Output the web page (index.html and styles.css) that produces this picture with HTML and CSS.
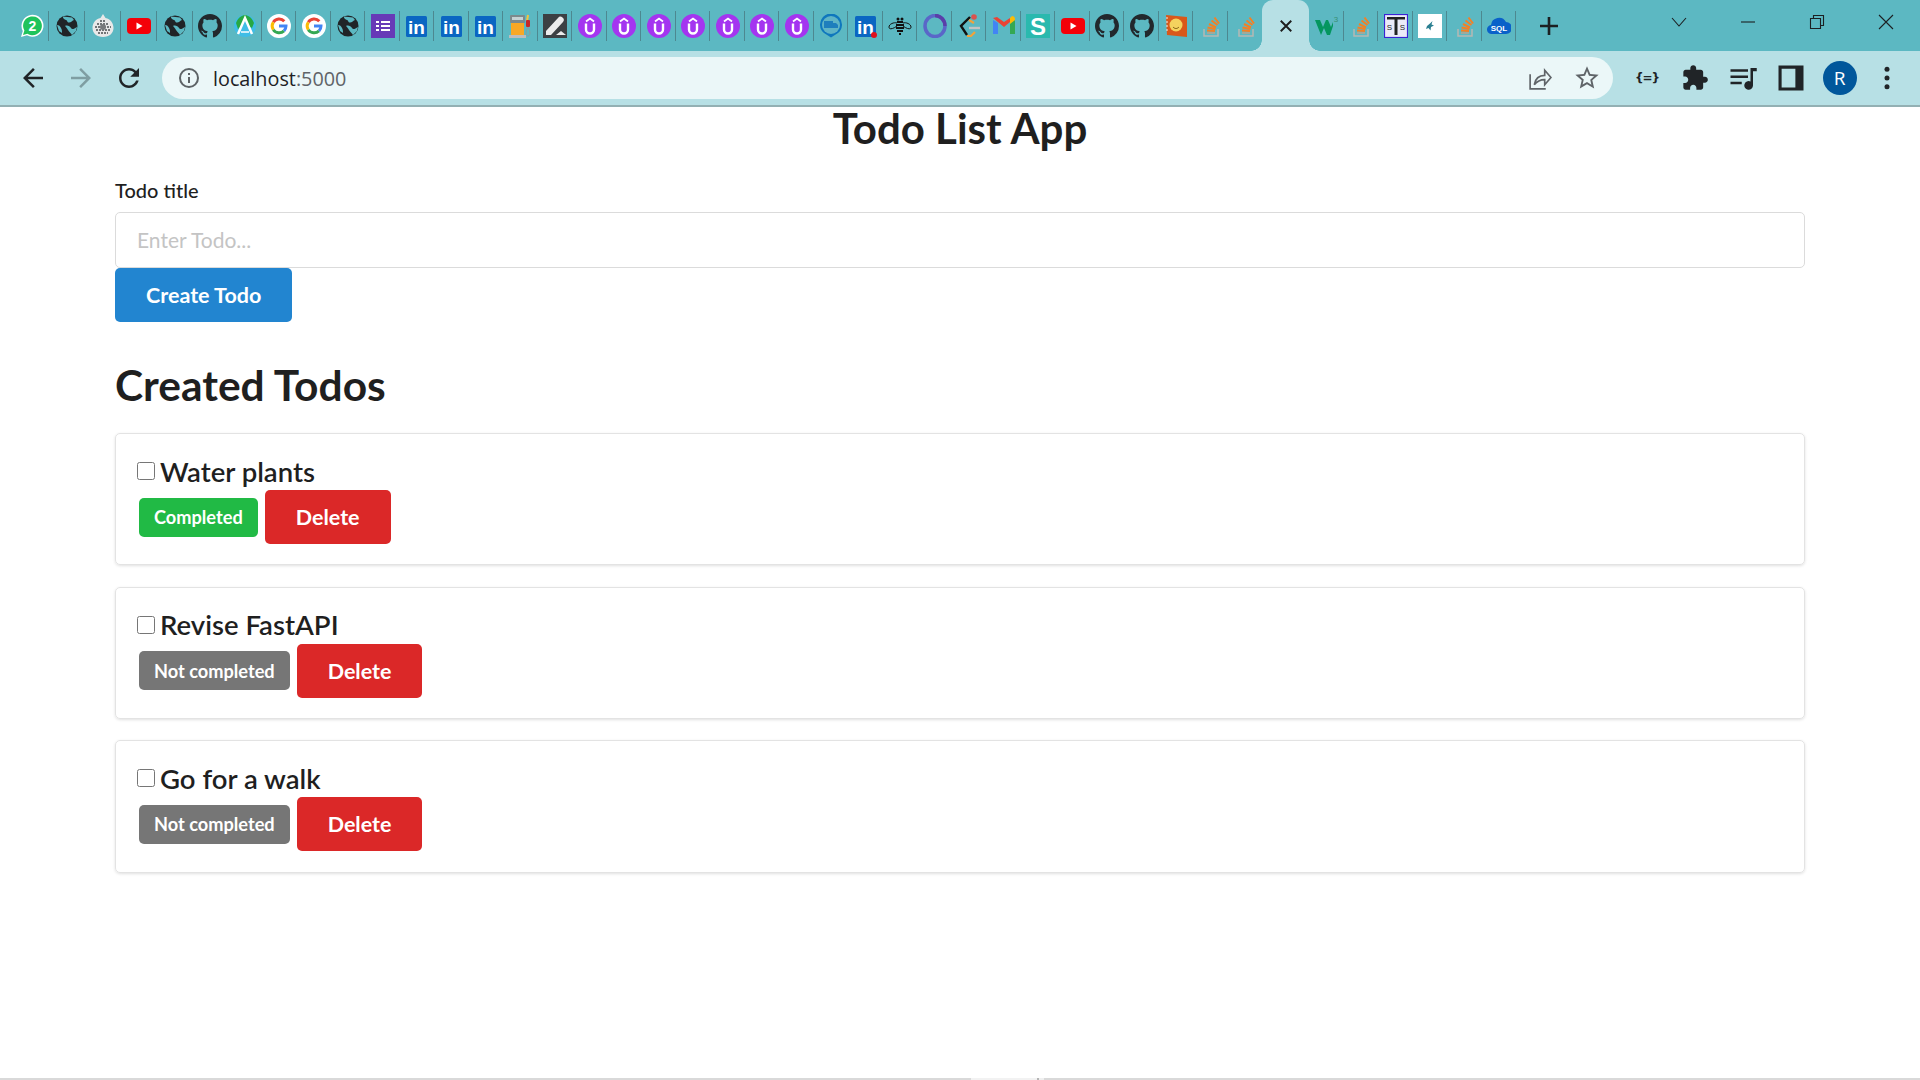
FILE: index.html
```html
<!DOCTYPE html>
<html lang="en">
<head>
    <meta charset="UTF-8">
    <meta name="viewport" content="width=device-width, initial-scale=1.0">
    <title>Todo List App</title>
    <link rel="stylesheet" href="styles.css">
</head>
<body>
    <svg class="sprites" xmlns="http://www.w3.org/2000/svg">
        <symbol id="whatsapp" viewBox="0 0 24 24">
            <path d="M1 23l1.800-6A11 11 0 1 1 7 21.300z" fill="#fff"/>
            <path d="M3 21l1.400-4.400A9.400 9.400 0 1 1 7.400 19.700z" fill="#1fc35c"/>
            <text x="12.400" y="17" text-anchor="middle" font-family="Liberation Sans" font-weight="700" font-size="14" fill="#fff">2</text>
        </symbol>
        <symbol id="globe" viewBox="0 0 24 24">
            <circle cx="12" cy="12" r="10.500" fill="#202427"/>
            <path d="M8 2.500c-.5 2 1.500 3 3 3.500s1 2.500 3 2.500 3.500-2 5-2.500l-2-2.500zM10 12c2-1 5 0 6 2s3 1 6-1l-1 4-4 4c-1-2-3-3-4-5s-2-3-3-4zM2 11c2 0 3 1 4 3s1 3 1 5l-3-2z" fill="#5cb8c2"/>
        </symbol>
        <symbol id="emblem" viewBox="0 0 24 24">
            <path d="M12 0l2.500 4c5 1 8 5 8 10 0 5-4 9-10.500 9S1.500 19 1.500 14c0-5 3-9 8-10z" fill="#e8e8e8"/>
            <path d="M6 10h12M4 13h16M5 16h14M7 19h10M9 7h6" stroke="#4b4f51" stroke-width="1.500" stroke-dasharray="2 1"/>
            <circle cx="12" cy="13" r="3" fill="#77797b"/>
        </symbol>
        <symbol id="youtube" viewBox="0 0 24 24">
            <rect y="4" width="24" height="16" rx="4" fill="#f40008"/>
            <path d="M9.500 8.500l6 3.500-6 3.500z" fill="#fff"/>
        </symbol>
        <symbol id="github" viewBox="0 0 16 16">
            <path fill="#22282c" fill-rule="evenodd" d="M8 0C3.58 0 0 3.58 0 8c0 3.54 2.29 6.53 5.47 7.59.4.07.55-.17.55-.38 0-.19-.01-.82-.01-1.49-2.01.37-2.53-.49-2.69-.94-.09-.23-.48-.94-.82-1.13-.28-.15-.68-.52-.01-.53.63-.01 1.08.58 1.23.82.72 1.21 1.87.87 2.33.66.07-.52.28-.87.51-1.07-1.78-.2-3.64-.89-3.64-3.95 0-.87.31-1.59.82-2.15-.08-.2-.36-1.02.08-2.12 0 0 .67-.21 2.2.82.64-.18 1.32-.27 2-.27.68 0 1.36.09 2 .27 1.53-1.04 2.2-.82 2.2-.82.44 1.1.16 1.92.08 2.12.51.56.82 1.27.82 2.15 0 3.07-1.87 3.75-3.65 3.95.29.25.54.73.54 1.48 0 1.07-.01 1.93-.01 2.2 0 .21.15.46.55.38A8.013 8.013 0 0016 8c0-4.42-3.58-8-8-8z"/>
        </symbol>
        <symbol id="peak" viewBox="0 0 24 24">
            <circle cx="12" cy="12" r="11" fill="#3fbde6"/>
            <path d="M3 9c2-6 7-8 9-8s7 2 9 8l-2 5-5-3-2-6-2 6-5 4z" fill="#27a844"/>
            <path d="M5 20L12 4l7 16" fill="none" stroke="#fff" stroke-width="2.500"/>
            <path d="M8 18h8" stroke="#fff" stroke-width="1.500"/>
        </symbol>
        <symbol id="google" viewBox="0 0 24 24">
            <circle cx="12" cy="12" r="12" fill="#fff"/>
            <path d="M17.300 7.300A7 7 0 0 0 6.300 8.300" fill="none" stroke="#ea4335" stroke-width="3"/>
            <path d="M6.300 8.300a7 7 0 0 0 0 7.400" fill="none" stroke="#fbbc05" stroke-width="3"/>
            <path d="M6.300 15.700a7 7 0 0 0 10.700 1.200" fill="none" stroke="#34a853" stroke-width="3"/>
            <path d="M17 16.900a7 7 0 0 0 2-4.900h-7" fill="none" stroke="#4285f4" stroke-width="3"/>
        </symbol>
        <symbol id="forms" viewBox="0 0 24 24">
            <rect width="24" height="24" fill="#673ab7"/>
            <path d="M10 8h9M10 12h9M10 16h9M5 8h3M5 12h3M5 16h3" stroke="#fff" stroke-width="2"/>
        </symbol>
        <symbol id="linkedin" viewBox="0 0 24 24">
            <rect x="1" y="2" width="21" height="21" rx="1.500" fill="#0a66c2"/>
            <text x="11.500" y="20" text-anchor="middle" font-family="Liberation Sans" font-weight="700" font-size="19" fill="#fff">in</text>
        </symbol>
        <symbol id="linkedin-dot" viewBox="0 0 24 24">
            <use href="#linkedin"/>
            <circle cx="20" cy="21" r="3" fill="#e0101c"/>
        </symbol>
        <symbol id="fuel" viewBox="0 0 24 24">
            <rect x="1" y="1" width="15" height="8" rx="1" fill="#7d8a8d"/>
            <rect x="3" y="3" width="11" height="3" fill="#c6d2d4"/>
            <rect x="2" y="9" width="13" height="12" fill="#f9a825"/>
            <rect x="0" y="21" width="17" height="3" fill="#bdbdbd"/>
            <path d="M19 1l-1 6" stroke="#f6c33b" stroke-width="2"/>
            <rect x="17" y="6" width="4" height="7" rx="1" fill="#c62828"/>
            <path d="M19 13c-3 5-2 9 0 9s3-4 0-9z" fill="none" stroke="#8d9b9d" stroke-width="1"/>
        </symbol>
        <symbol id="pen" viewBox="0 0 24 24">
            <rect width="24" height="24" fill="#3c4043"/>
            <path d="M3 17L15 4a3 3 0 0 1 5 4L8 21H3z" fill="#ececec"/>
            <path d="M13 21l5-4 5 4z" fill="#ececec"/>
        </symbol>
        <symbol id="udemy" viewBox="0 0 24 24">
            <circle cx="12" cy="12" r="12" fill="#a435f0"/>
            <path d="M8 9.500v6a4 4 0 0 0 8 0v-6" fill="none" stroke="#fff" stroke-width="2.400"/>
            <path d="M8 7.500l4-3 4 3" fill="none" stroke="#fff" stroke-width="1.800"/>
        </symbol>
        <symbol id="bubble" viewBox="0 0 24 24">
            <path d="M12 23.500L5 19a11 11 0 1 1 14 0z" fill="#0f77bd"/>
            <circle cx="12" cy="11" r="9" fill="#5fb4c6"/>
            <path d="M5 7h9v7H5zM14 9h3l2 2v3h-5z" fill="#1e7ebd"/>
        </symbol>
        <symbol id="bee" viewBox="0 0 24 24">
            <path d="M9 9c-3-1-8 1-8 4s4 2 8-1M15 9c3-1 8 1 8 4s-4 2-8-1" fill="none" stroke="#111" stroke-width="1"/>
            <circle cx="10" cy="5" r="1.500" fill="#111"/>
            <circle cx="14" cy="5" r="1.500" fill="#111"/>
            <path d="M9 8h6M8 11h8M8 14h8M9 17h6M11 20h2" stroke="#111" stroke-width="1.800"/>
        </symbol>
        <symbol id="ring" viewBox="0 0 24 24">
            <ellipse cx="12" cy="12" rx="10" ry="10.500" fill="none" stroke="#5a66c8" stroke-width="3.500"/>
            <path d="M12 1.500A10 10.500 0 0 1 22 12" fill="none" stroke="#5a3fa8" stroke-width="3.500"/>
        </symbol>
        <symbol id="leetcode" viewBox="0 0 24 24">
            <path d="M13 3L4 12l6 9" fill="none" stroke="#111" stroke-width="2.400"/>
            <path d="M12 6l5 3M10 22h4l4-4" fill="none" stroke="#f2a33a" stroke-width="2.200"/>
            <path d="M12 14h11" stroke="#c4c4c4" stroke-width="2.400"/>
            <circle cx="17" cy="3" r="2.800" fill="#d9534f"/>
        </symbol>
        <symbol id="gmail" viewBox="0 0 24 24">
            <path d="M1 6v14h5V9z" fill="#4285f4"/>
            <path d="M18 9v11h5V6z" fill="#34a853"/>
            <path d="M1 4l11 9 6-5V4l-6 4-7-5z" fill="#ea4335"/>
            <path d="M18 4l2-2c2 0 3 1 3 4l-5 4z" fill="#fbbc05"/>
        </symbol>
        <symbol id="scaler" viewBox="0 0 24 24">
            <rect width="24" height="24" fill="#2ab9ae"/>
            <text x="12" y="20.500" text-anchor="middle" font-family="Liberation Sans" font-weight="700" font-size="24" fill="#fff">S</text>
        </symbol>
        <symbol id="book" viewBox="0 0 24 24">
            <path d="M2 1l21 2v20L3 21z" fill="#d9581a"/>
            <circle cx="12" cy="11" r="6.500" fill="#f4d35e"/>
            <path d="M9 13c2 2 4 2 6 0" fill="none" stroke="#7a5a10" stroke-width="1"/>
            <path d="M2 4h2M2 8h2M2 12h2M2 16h2" stroke="#eee" stroke-width="1"/>
        </symbol>
        <symbol id="stack" viewBox="0 0 24 24">
            <path d="M5 15v7h14v-7" fill="none" stroke="#b5b8b4" stroke-width="1.500"/>
            <path d="M8 19h8" stroke="#b9a58f" stroke-width="1.500"/>
            <path d="M8 16.500l8 .5M8.500 13.500l8 1.500M10 10l7 3.500M12.500 6.500l6 4.500M15.500 3.500l4.500 6" stroke="#f48024" stroke-width="2"/>
        </symbol>
        <symbol id="w3" viewBox="0 0 24 24">
            <path d="M0 6h5l3 7 3-7h2l3 7 2-5v4l-3 9h-3l-3-7-3 7H6z" fill="#04965f"/>
            <text x="21" y="8" text-anchor="middle" font-family="Liberation Sans" font-size="8" fill="#3b8f72">3</text>
        </symbol>
        <symbol id="scales" viewBox="0 0 24 24">
            <rect x=".5" y=".5" width="23" height="23" fill="#eceaf8" stroke="#3a22d4" stroke-width="1.200"/>
            <path d="M3 3h18v2.500h-7.500V21h-3V5.500H3z" fill="#222"/>
            <text x="5.500" y="16" text-anchor="middle" font-family="Liberation Sans" font-size="8" fill="#222">S</text>
            <text x="18.500" y="16" text-anchor="middle" font-family="Liberation Sans" font-size="8" fill="#222">S</text>
        </symbol>
        <symbol id="spark" viewBox="0 0 24 24">
            <rect width="24" height="24" fill="#fff"/>
            <path d="M14.500 7l-1 3.500 2.500 1-3 1.500-.5 3.500-2-2.500-2.500 1 1-3 3-2.500z" fill="#2a7f91"/>
        </symbol>
        <symbol id="sql" viewBox="0 0 24 24">
            <path d="M5 20a4.500 4.500 0 0 1-1-9 8 8 0 0 1 15-3 6 6 0 0 1 0 12z" fill="#0a61c9"/>
            <text x="12" y="16.500" text-anchor="middle" font-family="Liberation Sans" font-weight="700" font-size="8" fill="#fff">SQL</text>
        </symbol>
    </svg>

    <header class="chrome">
        <div class="tabstrip">
            <div class="tab tab-first"><svg class="fav"><use href="#whatsapp"/></svg></div>
            <div class="tab tab-wide"><svg class="fav"><use href="#globe"/></svg></div>
            <div class="tab tab-wide"><svg class="fav"><use href="#emblem"/></svg></div>
            <div class="tab tab-wide"><svg class="fav"><use href="#youtube"/></svg></div>
            <div class="tab tab-wide"><svg class="fav"><use href="#globe"/></svg></div>
            <div class="tab"><svg class="fav"><use href="#github"/></svg></div>
            <div class="tab"><svg class="fav"><use href="#peak"/></svg></div>
            <div class="tab"><svg class="fav"><use href="#google"/></svg></div>
            <div class="tab"><svg class="fav"><use href="#google"/></svg></div>
            <div class="tab"><svg class="fav"><use href="#globe"/></svg></div>
            <div class="tab"><svg class="fav"><use href="#forms"/></svg></div>
            <div class="tab"><svg class="fav"><use href="#linkedin"/></svg></div>
            <div class="tab"><svg class="fav"><use href="#linkedin"/></svg></div>
            <div class="tab"><svg class="fav"><use href="#linkedin"/></svg></div>
            <div class="tab"><svg class="fav"><use href="#fuel"/></svg></div>
            <div class="tab"><svg class="fav"><use href="#pen"/></svg></div>
            <div class="tab"><svg class="fav"><use href="#udemy"/></svg></div>
            <div class="tab"><svg class="fav"><use href="#udemy"/></svg></div>
            <div class="tab"><svg class="fav"><use href="#udemy"/></svg></div>
            <div class="tab"><svg class="fav"><use href="#udemy"/></svg></div>
            <div class="tab"><svg class="fav"><use href="#udemy"/></svg></div>
            <div class="tab"><svg class="fav"><use href="#udemy"/></svg></div>
            <div class="tab"><svg class="fav"><use href="#udemy"/></svg></div>
            <div class="tab"><svg class="fav"><use href="#bubble"/></svg></div>
            <div class="tab"><svg class="fav"><use href="#linkedin-dot"/></svg></div>
            <div class="tab"><svg class="fav"><use href="#bee"/></svg></div>
            <div class="tab"><svg class="fav"><use href="#ring"/></svg></div>
            <div class="tab"><svg class="fav"><use href="#leetcode"/></svg></div>
            <div class="tab"><svg class="fav"><use href="#gmail"/></svg></div>
            <div class="tab"><svg class="fav"><use href="#scaler"/></svg></div>
            <div class="tab"><svg class="fav"><use href="#youtube"/></svg></div>
            <div class="tab"><svg class="fav"><use href="#github"/></svg></div>
            <div class="tab"><svg class="fav"><use href="#github"/></svg></div>
            <div class="tab"><svg class="fav"><use href="#book"/></svg></div>
            <div class="tab"><svg class="fav"><use href="#stack"/></svg></div>
            <div class="tab tab-last"><svg class="fav"><use href="#stack"/></svg></div>
            <div class="tab-active">
                <svg class="tab-close" viewBox="0 0 16 16"><path d="M2 2l12 12M14 2L2 14"/></svg>
            </div>
            <div class="tab"><svg class="fav"><use href="#w3"/></svg></div>
            <div class="tab"><svg class="fav"><use href="#stack"/></svg></div>
            <div class="tab"><svg class="fav"><use href="#scales"/></svg></div>
            <div class="tab"><svg class="fav"><use href="#spark"/></svg></div>
            <div class="tab"><svg class="fav"><use href="#stack"/></svg></div>
            <div class="tab"><svg class="fav"><use href="#sql"/></svg></div>
            <svg class="new-tab" viewBox="0 0 18 18"><path d="M9 0v18M0 9h18"/></svg>
            <div class="window-controls">
                <svg class="win-icon" viewBox="0 0 16 16"><path d="M1 4l7 8 7-8"/></svg>
                <svg class="win-icon" viewBox="0 0 16 16"><path d="M1 8h14"/></svg>
                <svg class="win-icon" viewBox="0 0 16 16"><path d="M1.500 4.500h10v10h-10zM4.500 4.500v-3h10v10h-3"/></svg>
                <svg class="win-icon" viewBox="0 0 16 16"><path d="M1 1l14 14M15 1L1 15"/></svg>
            </div>
        </div>

        <div class="toolbar">
            <span class="tool"><svg class="icon-lg" viewBox="0 0 24 24"><path d="M20 11H7.830l5.590-5.590L12 4l-8 8 8 8 1.410-1.410L7.830 13H20v-2z"/></svg></span>
            <span class="tool tool-off"><svg class="icon-lg" viewBox="0 0 24 24"><path d="M12 4l-1.410 1.410L16.170 11H4v2h12.170l-5.580 5.590L12 20l8-8z"/></svg></span>
            <span class="tool"><svg class="icon-lg" viewBox="0 0 24 24"><path d="M17.650 6.350C16.200 4.900 14.210 4 12 4c-4.420 0-7.990 3.580-7.990 8s3.570 8 7.990 8c3.730 0 6.840-2.550 7.730-6h-2.080c-.82 2.330-3.040 4-5.650 4-3.310 0-6-2.690-6-6s2.690-6 6-6c1.660 0 3.140.69 4.220 1.780L13 11h7V4l-2.350 2.350z"/></svg></span>
            <div class="omnibox">
                <svg class="info-icon" viewBox="0 0 24 24"><circle cx="12" cy="12" r="9"/><path d="M12 11v6M12 7v2"/></svg>
                <span class="url">localhost<span class="url-port">:5000</span></span>
                <span class="omni-btn"><svg class="share-icon" viewBox="0 0 24 24"><path d="M3 8v14h15M7 18c1-6 5-9 10-9V4l6 7-6 7v-5c-4 0-7 1-10 5z"/></svg></span>
                <span class="omni-btn"><svg class="star-icon" viewBox="0 0 24 24"><path d="M22 9.240l-7.190-.62L12 2 9.190 8.630 2 9.240l5.460 4.730L5.820 21 12 17.270 18.180 21l-1.630-7.030L22 9.240zM12 15.400l-3.760 2.270 1-4.280-3.320-2.880 4.380-.38L12 6.100l1.710 4.040 4.380.38-3.320 2.880 1 4.280L12 15.400z"/></svg></span>
            </div>
            <span class="tool"><span class="braces">{=}</span></span>
            <span class="tool"><svg class="icon-puzzle" viewBox="0 0 24 24"><path d="M20.500 11H19V7c0-1.100-.9-2-2-2h-4V3.500C13 2.120 11.880 1 10.500 1S8 2.120 8 3.500V5H4c-1.100 0-1.990.9-1.990 2v3.800H3.500c1.490 0 2.700 1.210 2.700 2.700s-1.210 2.700-2.700 2.700H2V20c0 1.100.9 2 2 2h3.800v-1.500c0-1.490 1.210-2.700 2.700-2.700 1.490 0 2.700 1.210 2.700 2.700V22H17c1.100 0 2-.9 2-2v-4h1.500c1.380 0 2.500-1.120 2.500-2.500S21.880 11 20.500 11z"/></svg></span>
            <span class="tool"><svg class="icon-lg" viewBox="0 0 24 24"><path d="M2 5h14v2H2zM2 10h14v2H2zM2 15h9v2H2zM18 4h5v2.500h-3V18a3.500 3.500 0 1 1-2-3.200z"/></svg></span>
            <span class="tool"><svg class="icon-lg" viewBox="0 0 24 24"><path fill-rule="evenodd" d="M2 2h20v20H2zM4.500 4.500v15h11v-15z"/></svg></span>
            <span class="tool"><span class="avatar">R</span></span>
            <span class="tool"><svg class="icon-lg" viewBox="0 0 24 24"><circle cx="12" cy="5" r="2"/><circle cx="12" cy="12" r="2"/><circle cx="12" cy="19" r="2"/></svg></span>
        </div>
    </header>

    <main class="page">
        <h1 class="app-title">Todo List App</h1>
        <form class="todo-form">
            <label class="field-label" for="todoTitle">Todo title</label>
            <input class="field-input" id="todoTitle" type="text" placeholder="Enter Todo...">
            <button class="btn btn-blue" type="button">Create Todo</button>
        </form>

        <h2 class="section-title">Created Todos</h2>

        <div class="todo-list">
            <div class="todo-card">
                <div class="todo-head">
                    <input class="todo-check" type="checkbox">
                    <span class="todo-name">Water plants</span>
                </div>
                <div class="todo-actions">
                    <span class="tag tag-green">Completed</span>
                    <button class="btn btn-red" type="button">Delete</button>
                </div>
            </div>
            <div class="todo-card">
                <div class="todo-head">
                    <input class="todo-check" type="checkbox">
                    <span class="todo-name">Revise FastAPI</span>
                </div>
                <div class="todo-actions">
                    <span class="tag tag-grey">Not completed</span>
                    <button class="btn btn-red" type="button">Delete</button>
                </div>
            </div>
            <div class="todo-card">
                <div class="todo-head">
                    <input class="todo-check" type="checkbox">
                    <span class="todo-name">Go for a walk</span>
                </div>
                <div class="todo-actions">
                    <span class="tag tag-grey">Not completed</span>
                    <button class="btn btn-red" type="button">Delete</button>
                </div>
            </div>
        </div>
    </main>

    <footer class="bottom-edge">
        <span class="edge-light"></span>
        <span class="edge-dark"></span>
        <span class="edge-rest"></span>
    </footer>
</body>
</html>
```

FILE: styles.css
```css
* {
    box-sizing: border-box;
}
html, body {
    height: 100%;
}
body {
    margin: 0;
    display: flex;
    flex-direction: column;
    overflow: hidden;
    font-family: "Lato", "Liberation Sans", sans-serif;
    background-color: #fff;
    color: #1f1f1f;
}
.sprites {
    display: none;
}

/* browser frame */
.tabstrip {
    display: flex;
    align-items: center;
    height: 51px;
    padding-left: 14.7px;
    background-color: #5cb8c2;
}
.tab {
    display: flex;
    align-items: center;
    justify-content: center;
    flex: none;
    width: 34.5px;
    height: 30px;
    padding-left: 1.5px;
    border-right: 1.5px solid #4d8890;
}
.tab-first {
    width: 34px;
}
.tab-wide {
    width: 36px;
}
.tab-last {
    border-right: none;
}
.fav {
    flex: none;
    width: 24px;
    height: 24px;
}
.tab-active {
    position: relative;
    display: flex;
    align-items: center;
    justify-content: center;
    flex: none;
    width: 47px;
    height: 51px;
    border-radius: 11px 11px 0 0;
    background-color: #b7e0e5;
}
.tab-active::before,
.tab-active::after {
    content: "";
    position: absolute;
    bottom: 0;
    width: 11px;
    height: 11px;
}
.tab-active::before {
    left: -11px;
    background: radial-gradient(circle at 0 0, transparent 10.5px, #b7e0e5 11px);
}
.tab-active::after {
    right: -11px;
    background: radial-gradient(circle at 100% 0, transparent 10.5px, #b7e0e5 11px);
}
.tab-close {
    width: 14px;
    height: 14px;
    fill: none;
    stroke: #1c1c1c;
    stroke-width: 2.2;
}
.new-tab {
    width: 18px;
    height: 18px;
    margin-left: 24px;
    fill: none;
    stroke: #1c2022;
    stroke-width: 2.6;
}
.window-controls {
    display: flex;
    align-items: center;
    gap: 53px;
    margin-left: auto;
    margin-right: 26px;
    padding-bottom: 8px;
}
.win-icon {
    width: 16px;
    height: 16px;
    fill: none;
    stroke: #1c2022;
    stroke-width: 1.1;
}

.toolbar {
    display: flex;
    align-items: center;
    height: 56px;
    padding: 0 9px;
    background-color: #b7e0e5;
    border-bottom: 2px solid #93b0b3;
}
.tool {
    display: flex;
    align-items: center;
    justify-content: center;
    flex: none;
    width: 48px;
    height: 40px;
    color: #202427;
}
.tool-off {
    color: #7f9ea2;
}
.icon-lg {
    width: 30px;
    height: 30px;
    fill: currentColor;
}
.icon-puzzle {
    width: 28px;
    height: 28px;
    fill: currentColor;
}
.omnibox {
    display: flex;
    align-items: center;
    flex: 1;
    height: 42px;
    margin: 0 10px 0 9px;
    padding: 0 2px 0 15px;
    border-radius: 21px;
    background-color: #ebf7f8;
}
.info-icon {
    width: 24px;
    height: 24px;
    fill: none;
    stroke: #5d6366;
    stroke-width: 2;
}
.url {
    flex: 1;
    margin-left: 12px;
    font-family: "Open Sans", sans-serif;
    font-size: 19.8px;
    color: #202124;
}
.url-port {
    color: #5f6468;
}
.omni-btn {
    display: flex;
    align-items: center;
    justify-content: center;
    width: 48px;
}
.share-icon {
    width: 25px;
    height: 25px;
    fill: none;
    stroke: #5f6468;
    stroke-width: 1.6;
}
.star-icon {
    width: 28px;
    height: 28px;
    fill: #5f6468;
}
.braces {
    font-family: "DejaVu Sans", sans-serif;
    font-size: 12px;
    font-weight: 700;
    letter-spacing: -1px;
}
.avatar {
    display: flex;
    align-items: center;
    justify-content: center;
    width: 34px;
    height: 34px;
    margin-left: 1px;
    border-radius: 50%;
    background-color: #01579b;
    color: #fff;
    font-family: "Open Sans", sans-serif;
    font-size: 19px;
}

/* todo page */
.page {
    flex: 1;
    padding: 0 115px;
}
.app-title {
    margin: 0;
    height: 45px;
    line-height: 42px;
    text-align: center;
    font-size: 42px;
    font-weight: 700;
}
.todo-form {
    display: flex;
    flex-direction: column;
    align-items: flex-start;
    padding-top: 24px;
}
.field-label {
    height: 36px;
    line-height: 28px;
    font-size: 20px;
    font-weight: 500;
}
.field-input {
    width: 100%;
    height: 56px;
    padding: 0 21px 2px;
    border: 1px solid #dbdbdb;
    border-radius: 5px;
    font-family: inherit;
    font-size: 21px;
    color: #363636;
}
.field-input::placeholder {
    color: #c4c4c4;
}
.btn {
    height: 54px;
    padding: 0 31px;
    border: none;
    border-radius: 5px;
    color: #fff;
    font-family: inherit;
    font-size: 21.5px;
    font-weight: 700;
}
.btn-blue {
    background-color: #2285d0;
}
.btn-red {
    background-color: #db2828;
}
.section-title {
    margin: 35px 0 0;
    height: 76px;
    line-height: 56px;
    font-size: 42.5px;
    font-weight: 700;
}
.todo-list {
    display: flex;
    flex-direction: column;
    gap: 21.5px;
}
.todo-card {
    height: 132.2px;
    padding: 18px 21px 0;
    border: 1px solid #e3e3e3;
    border-radius: 5px;
    box-shadow: 0 1px 3px rgba(0, 0, 0, 0.12);
}
.todo-head {
    display: flex;
    align-items: center;
    gap: 5px;
    height: 38px;
}
.todo-check {
    width: 18px;
    height: 18px;
    margin: 0;
}
.todo-name {
    font-size: 27.5px;
    font-weight: 600;
}
.todo-actions {
    display: flex;
    align-items: center;
    gap: 7px;
    padding-left: 2px;
}
.tag {
    display: flex;
    align-items: center;
    height: 39px;
    padding: 0 15px;
    border-radius: 5px;
    color: #fff;
    font-size: 18.2px;
    font-weight: 700;
}
.tag-green {
    background-color: #21ba45;
}
.tag-grey {
    background-color: #767676;
}

.bottom-edge {
    display: flex;
    flex: none;
    height: 2px;
    background-color: #d9d9d9;
}
.edge-light {
    width: 66px;
    margin-left: 971px;
    background-color: #f2f2f2;
}
.edge-dark {
    width: 2px;
    background-color: #b5b5b5;
}
.edge-rest {
    width: 5px;
    background-color: #efefef;
}
```
